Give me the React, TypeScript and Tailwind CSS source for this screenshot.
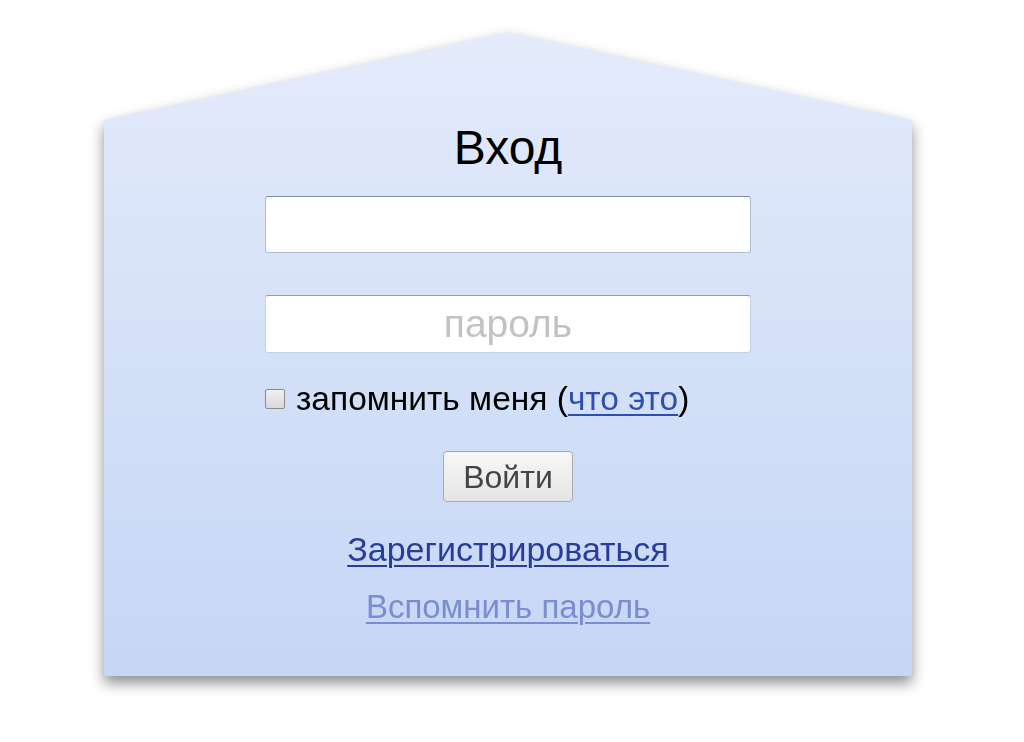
import React from 'react'

export default function App() {
  return (
    <div className="min-h-[742px] w-[1024px] bg-white pt-[32px] pl-[104px] font-['Liberation_Sans',Arial,sans-serif]">
      {/* House card */}
      <div className="w-[808px] drop-shadow-[0_7px_7px_rgba(0,0,0,0.45)]">
        <div className="h-[644px] w-full bg-gradient-to-b from-[#e4ebfb] to-[#c5d6f5] [clip-path:polygon(0_88px,50%_0,100%_88px,100%_100%,0_100%)]">
          <div className="flex flex-col items-center pt-[92px]">
            <h1 className="text-[48px] leading-none text-black">Вход</h1>

            <input
              type="text"
              className="mt-[24px] h-[57px] w-[486px] rounded-[3px] border border-[#aebdd0] border-t-[#7d90a6] bg-white px-3 text-[32px] outline-none"
            />
            <input
              type="text"
              placeholder="пароль"
              className="mt-[42px] h-[58px] w-[486px] rounded-[3px] border border-[#c3d0e2] border-t-[#8b9db2] bg-white px-3 text-center text-[39px] text-[#333] outline-none placeholder:text-[#c2c2c2]"
            />

            <div className="mt-[29px] flex w-[486px] items-center text-[33.5px] leading-[34px] text-black">
              <span className="mr-[11px] h-[20px] w-[20px] rounded-[2px] border border-[#8c8c8c] bg-gradient-to-b from-[#f0f0f0] to-[#d9d9d9]" />
              <span>
                запомнить меня (<a className="text-[#2f4fae] underline decoration-[2px] underline-offset-[4px]">что это</a>)
              </span>
            </div>

            <button className="mt-[35px] h-[51px] w-[130px] rounded-[4px] border border-[#aaaaaa] bg-gradient-to-b from-[#f8f8f8] to-[#e4e4e4] text-[32px] leading-none text-[#444]">
              Войти
            </button>

            <a className="mt-[30px] text-[34px] leading-none text-[#283d98] underline decoration-[2px] underline-offset-[4px]">
              Зарегистрироваться
            </a>
            <a className="mt-[24px] text-[33px] leading-none text-[#7b8ccf] underline decoration-[2px] underline-offset-[4px]">
              Вспомнить пароль
            </a>
          </div>
        </div>
      </div>
    </div>
  )
}
